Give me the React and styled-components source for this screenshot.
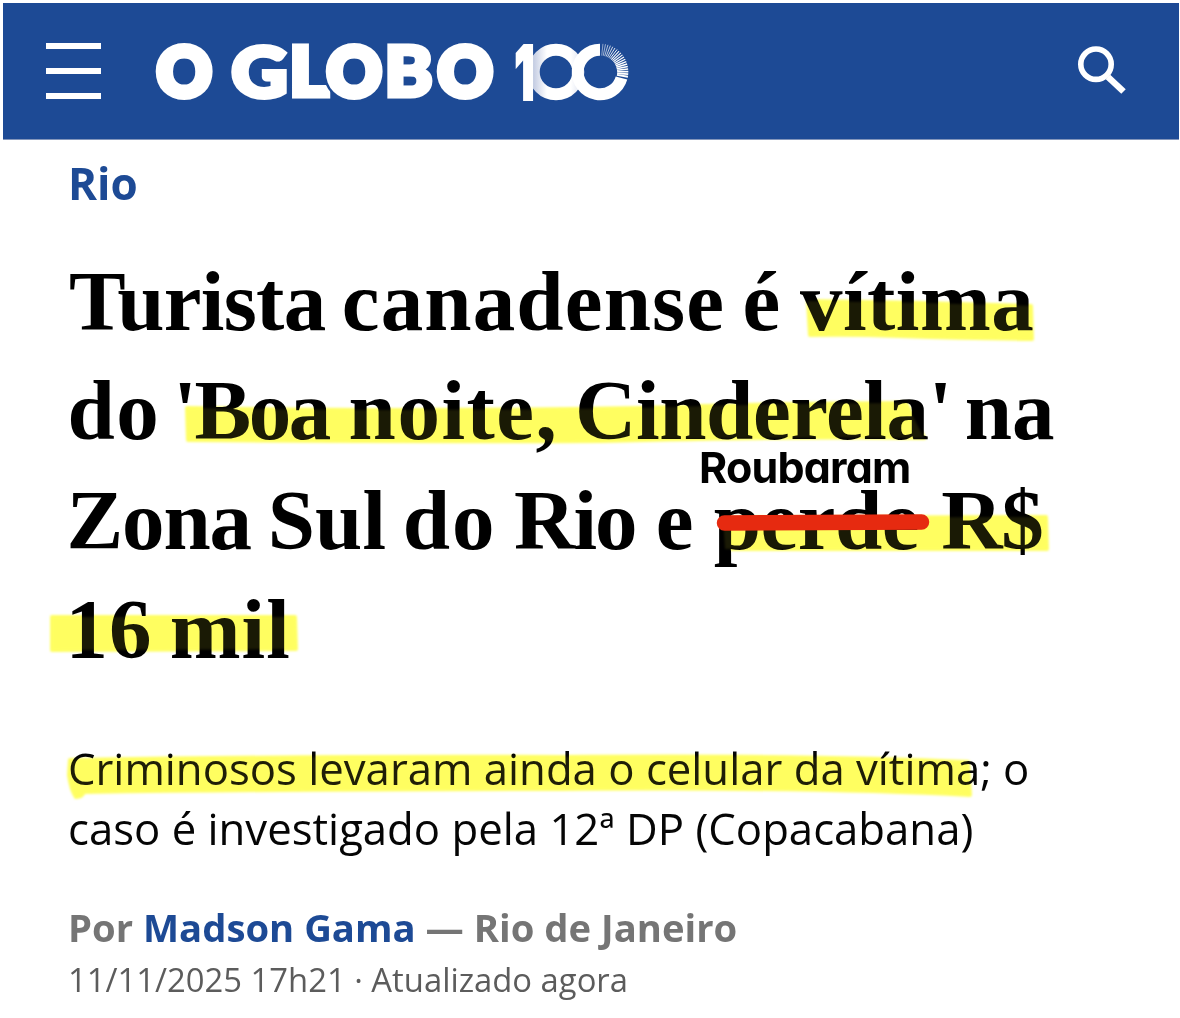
import React from "react"
import styled, { createGlobalStyle } from "styled-components"

const GlobalStyle=createGlobalStyle`
    body {
        margin: 0;
        background-color: #ffffff;
    }
`
const Container=styled.div`
    box-sizing: border-box;
    width: 1180px;
    height: 1018px;
    padding: 3px 1px 0px 3px;
    overflow: hidden;
    background-color: white;
    font-family: "Open Sans", "Noto Sans", sans-serif;
`
const Header=styled.header`
    box-sizing: border-box;
    height: 137px;
    padding: 0px 52px 0px 43px;
    display: flex;
    align-items: center;
    background-color: #1d4a95;
    border-bottom: 1px solid #8496bb;
`
const MenuButton=styled.div`
    width: 55px;
    height: 56px;
    margin-right: 1px;
    display: flex;
    flex-direction: column;
    justify-content: space-between;
`
const MenuBar=styled.span`
    height: 6px;
    background-color: white;
`
const Logo=styled.svg`
    width: 490px;
    height: 110px;
    margin-left: 50px;
    overflow: visible;
`
const LogoText=styled.text`
    font-family: Lato, sans-serif;
    font-weight: 900;
    font-size: ${(props) => (props.$round ? 67 : 69)}px;
    fill: white;
    stroke: white;
    stroke-width: ${(props) => (props.$round ? 7 : 5)}px;
`
const LogoOne=styled.text`
    font-family: Inter, sans-serif;
    font-weight: 800;
    font-size: 73px;
    fill: white;
    stroke: white;
    stroke-width: 4px;
`
const SearchIcon=styled.svg`
    width: 50px;
    height: 50px;
    margin-left: auto;
`
const Article=styled.main`
    position: relative;
    padding: 15px 65px 0px 66px;
`
const Section=styled.div`
    margin-left: -1px;
    font-size: 44px;
    font-weight: 700;
    line-height: 56px;
    color: #1d4a95;
`
const Title=styled.h1`
    margin: 36px 0px 0px;
    font-family: "Liberation Serif", serif;
    font-size: 85px;
    font-weight: 700;
    line-height: 109.3px;
    color: black;
`
const TitleLine=styled.div`
    white-space: nowrap;
`
const Word=styled.span`
    letter-spacing: ${(props) => props.$tracking}px;
    margin-left: ${(props) => props.$shift}px;
`
const Subtitle=styled.h2`
    margin: 54px 0px 0px -1px;
    font-size: 43.7px;
    font-weight: 420;
    line-height: 60px;
    white-space: nowrap;
    color: #050505;
`
const Byline=styled.div`
    margin: 43px 0px 0px -1px;
    font-size: 38.25px;
    font-weight: 700;
    line-height: 52px;
    color: #757575;
`
const Author=styled.span`
    color: #1d4a95;
`
const Published=styled.div`
    margin: 4px 0px 0px -1px;
    font-size: 32.8px;
    line-height: 46px;
    color: #5c5c5c;
`
const Markup=styled.svg`
    position: absolute;
    top: 0px;
    left: 0px;
    pointer-events: none;
    mix-blend-mode: ${(props) => props.$blend};
`
const Correction=styled.span`
    position: absolute;
    top: 301px;
    left: 696px;
    font-family: Inter, sans-serif;
    font-size: 43px;
    font-weight: 650;
    font-feature-settings: "cv11";
    letter-spacing: -0.8px;
    line-height: 52px;
    color: black;
`

// [word, letter spacing, left shift]
const titleLines=[
    [["Turista", -0.7, 0], ["canadense", 1.15, -5], ["é", 0, -4], ["vítima", 0.5, -1.5]],
    [["do", 1.6, -1.5], ["'Boa", -2.4, -8.5], ["noite,", 1.5, -1.6], ["Cinderela'", -0.4, -4.6], ["na", 0, -8.4]],
    [["Zona", -1.2, -2.4], ["Sul", 0, -4.2], ["do", 2, -4.6], ["Rio", -2, -3.6], ["e", 0, -1], ["perde", -0.5, -1], ["R$", -1.5, 1]],
    [["16", 1, -3.5], ["mil", 1, -4]],
]

const strokes=[
    "M808 301 Q920 302 1031 306 L1032 339 Q960 338 900 336 Q850 334 810 335 Z",
    "M187 408 Q400 412 640 408 Q780 403 906 403 L924 438 Q800 436 600 441 Q400 442 188 440 Z",
    "M723 518 L1046 517 L1047 549 L725 549 Z",
    "M52 617 L295 617 L296 649 L52 650 Z",
    "M70 760 Q300 756 560 757 Q820 755 968 762 L970 795 Q820 787 560 789 Q300 789 84 792 Q82 797 76 797 Q71 790 69 775 Z",
]

// the last zero dissolves into rays on its upper right side
const rays=Array.from({ length: 19 }, (_, i) => {
    const angle=((-84+i*5.2)*Math.PI)/180
    return {
        x1: 448+(16.5+i*0.04)*Math.cos(angle),
        y1: 32+(16.5+i*0.04)*Math.sin(angle),
        x2: 448+28.3*Math.cos(angle),
        y2: 32+28.3*Math.sin(angle),
        width: 0.5+i*0.075,
    }
})

const Brand = () => {
  return (
      <Logo viewBox="0 -24 490 110">
          <defs>
              <linearGradient id="fold" gradientUnits="userSpaceOnUse" x1="379" x2="432" y1="32" y2="32">
                  <stop offset="0" stopColor="#b9c3dd"/>
                  <stop offset="0.3" stopColor="#ffffff"/>
                  <stop offset="0.75" stopColor="#ffffff"/>
                  <stop offset="1" stopColor="#d5dced"/>
              </linearGradient>
          </defs>
          <LogoText $round x="5" y="56.2">O</LogoText>
          <LogoText transform="translate(79.5 57) scale(1.12 1)">G</LogoText>
          <LogoText transform="translate(137 56) scale(1.1 1)">L</LogoText>
          <circle cx="202" cy="32" r="31" fill="#1d4a95"/>
          <LogoText $round x="175" y="56.2">O</LogoText>
          <LogoText transform="translate(232.5 56) scale(1.05 1)">B</LogoText>
          <LogoText $round x="286" y="56.2">O</LogoText>
          <circle cx="404" cy="32" r="22.3" fill="none" stroke="url(#fold)" strokeWidth="12"/>
          <LogoOne transform="translate(363 58.5) scale(0.6 1)">1</LogoOne>
          <path d="M469.5 38 A22.3 22.3 0 1 1 448 9.7" fill="none" stroke="white" strokeWidth="12"/>
          {rays.map((ray, i) => (
              <line key={i} x1={ray.x1} y1={ray.y1} x2={ray.x2} y2={ray.y2} stroke="white" strokeWidth={ray.width}/>
          ))}
      </Logo>
  )
}

const App = () => {
  return (
      <Container>
          <GlobalStyle/>
          <Header>
              <MenuButton>
                  <MenuBar/>
                  <MenuBar/>
                  <MenuBar/>
              </MenuButton>
              <Brand/>
              <SearchIcon viewBox="0 0 50 50">
                  <circle cx="19" cy="18.2" r="15.2" fill="none" stroke="white" strokeWidth="5.6"/>
                  <path d="M31 31 L46.5 45.5" fill="none" stroke="white" strokeWidth="6.5"/>
              </SearchIcon>
          </Header>
          <Article>
              <Section>Rio</Section>
              <Title>
                  {titleLines.map((line, i) => (
                      <TitleLine key={i}>
                          {line.map(([word, tracking, shift], j) => (
                              <React.Fragment key={j}>
                                  {j>0 && " "}
                                  <Word $tracking={tracking} $shift={shift}>{word}</Word>
                              </React.Fragment>
                          ))}
                      </TitleLine>
                  ))}
              </Title>
              <Subtitle>
                  Criminosos levaram ainda o celular da vítima; o<br/>
                  caso é investigado pela 12ª DP (Copacabana)
              </Subtitle>
              <Byline>Por <Author>Madson Gama</Author> — Rio de Janeiro</Byline>
              <Published>11/11/2025 17h21 · Atualizado agora</Published>

              <Markup $blend="multiply" width="1176" height="878" viewBox="3 140 1176 878">
                  <defs>
                      <filter id="soft" x="-5%" y="-20%" width="110%" height="140%">
                          <feGaussianBlur stdDeviation="1.2"/>
                      </filter>
                  </defs>
                  {strokes.map((d) => <path key={d} d={d} fill="#ffff66" stroke="#ffff66" strokeWidth="4" strokeLinejoin="round" filter="url(#soft)"/>)}
              </Markup>
              <Markup $blend="normal" width="1176" height="878" viewBox="3 140 1176 878">
                  {strokes.map((d) => <path key={d} d={d} fill="#fff830" opacity="0.1" filter="url(#soft)"/>)}
                  <path d="M724.5 523 L921.5 522" fill="none" stroke="#e62a10" strokeWidth="15.5" strokeLinecap="round"/>
              </Markup>
              <Correction>Roubaram</Correction>
          </Article>
      </Container>
  )
}

export default App
